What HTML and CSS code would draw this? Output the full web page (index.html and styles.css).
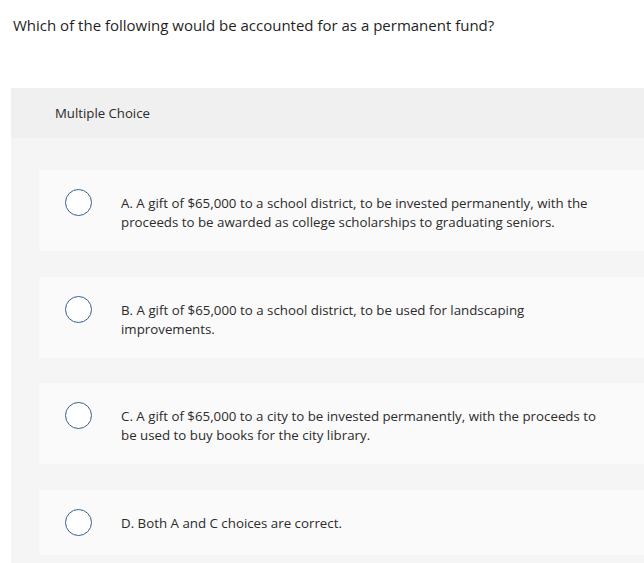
FILE: index.html
```html
<!DOCTYPE html>
<html>
<head>
<meta charset="utf-8">
<link rel="stylesheet" href="styles.css">
</head>
<body>
<p class="question">Which of the following would be accounted for as a permanent fund?</p>
<section class="mc">
  <div class="mc-header">Multiple Choice</div>
  <div class="mc-body">
    <label class="choice">
      <span class="radio"></span>
      <span class="choice-text">A. A gift of $65,000 to a school district, to be invested permanently, with the proceeds to be awarded as college scholarships to graduating seniors.</span>
    </label>
    <label class="choice">
      <span class="radio"></span>
      <span class="choice-text">B. A gift of $65,000 to a school district, to be used for landscaping improvements.</span>
    </label>
    <label class="choice">
      <span class="radio"></span>
      <span class="choice-text">C. A gift of $65,000 to a city to be invested permanently, with the proceeds to be used to buy books for the city library.</span>
    </label>
    <label class="choice">
      <span class="radio"></span>
      <span class="choice-text">D. Both A and C choices are correct.</span>
    </label>
  </div>
</section>
</body>
</html>
```

FILE: styles.css
```css
html, body {
  margin: 0;
  padding: 0;
  background: #ffffff;
}
body {
  font-family: "Open Sans", "Liberation Sans", sans-serif;
  color: #2b2b2b;
  overflow: hidden;
}
.question {
  margin: 0;
  padding: 15px 0 0 13px;
  font-size: 15px;
  line-height: 20px;
  color: #1f1f1f;
}
.mc {
  margin: 53px 0 0 11px;
  background: #f5f5f5;
}
.mc-header {
  background: #f0f0f0;
  height: 50px;
  display: flex;
  align-items: center;
  padding-left: 44px;
  font-size: 13.2px;
  color: #2b2b2b;
}
.mc-body {
  padding: 32px 0 30px 28px;
  display: flex;
  flex-direction: column;
  gap: 25.5px;
}
.choice {
  display: flex;
  align-items: flex-start;
  background: #fafafa;
  border-radius: 3px 0 0 3px;
  padding: 19px 0 19px 26px;
}
.radio {
  flex: none;
  width: 25px;
  height: 25px;
  border: 1.5px solid #3a5f8c;
  border-radius: 50%;
  background: #ffffff;
}
.choice-text {
  padding: 5px 0 0 29px;
  max-width: 486px;
  font-size: 13.3px;
  line-height: 19px;
  color: #2b2b2b;
}
```
